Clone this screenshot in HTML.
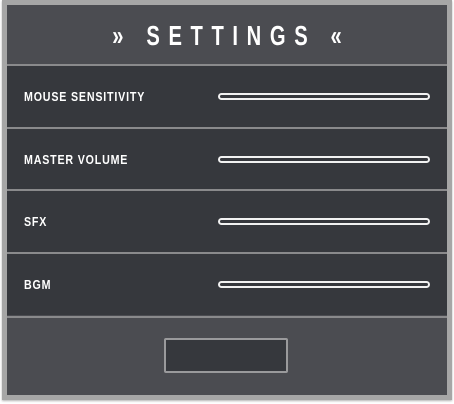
<!DOCTYPE html>
<html><head><style>
html,body{margin:0;padding:0;background:#fff;width:454px;height:404px;overflow:hidden}
.panel{position:absolute;left:2px;top:0;width:440px;height:390px;border:5px solid #a6a6a6;background:#4b4c51;box-shadow:0 1px 2px rgba(0,0,0,.3)}
.hdr{position:absolute;left:0;top:0;width:440px;height:60px;color:#fff;font-family:"Liberation Sans",sans-serif;font-weight:bold;font-size:28px;letter-spacing:12px;text-align:center;line-height:62px;transform:scaleX(0.72);transform-origin:220px 0;text-indent:12px;white-space:nowrap}
.row{position:absolute;left:0;width:440px;height:61px;background:#36383d;border-top:2px solid #8a8a8c}
.row span{position:absolute;left:17px;top:23px;color:#fff;font-family:"Liberation Sans",sans-serif;font-weight:bold;font-size:13px;letter-spacing:1px;transform:scaleX(0.82);transform-origin:0 0;white-space:nowrap}
.row i{position:absolute;left:211px;top:27px;width:208px;height:3px;border:2px solid #f2f2f2;border-radius:4px}
.foot{position:absolute;left:0;top:311px;width:440px;height:79px;border-top:2px solid #8a8a8c}
.btn{position:absolute;left:157px;top:20px;width:120px;height:31px;background:#36383d;border:2px solid #9a9a9c;border-radius:2px}
</style></head><body>
<div class="panel">
<div class="hdr">» SETTINGS «</div>
<div class="row" style="top:59px"><span>MOUSE SENSITIVITY</span><i></i></div>
<div class="row" style="top:122px"><span>MASTER VOLUME</span><i></i></div>
<div class="row" style="top:184px"><span>SFX</span><i></i></div>
<div class="row" style="top:247px"><span>BGM</span><i></i></div>
<div class="foot"><div class="btn"></div></div>
</div>
</body></html>
